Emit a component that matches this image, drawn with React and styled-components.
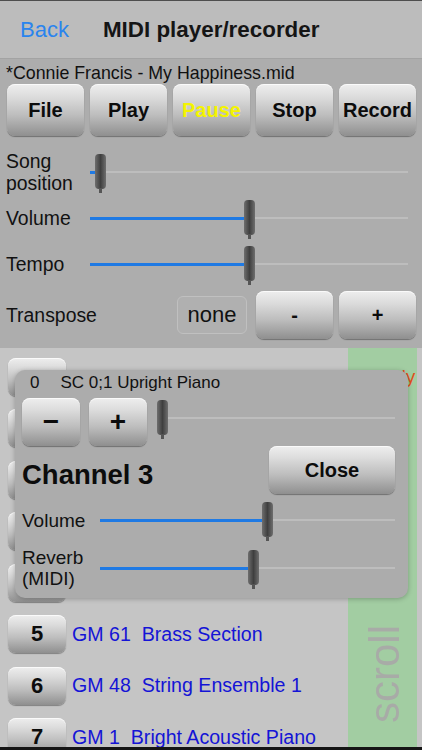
import React from "react";
import styled, { createGlobalStyle } from "styled-components";

const GlobalStyle = createGlobalStyle`
  html, body {
    margin: 0;
    padding: 0;
  }
  body {
    font-family: "Liberation Sans", Arial, sans-serif;
    background: #adadad;
  }
`;

// rows 0-4 sit under the channel popup, so their labels are not shown
const channels = [
  { n: "", name: "" },
  { n: "", name: "" },
  { n: "", name: "" },
  { n: "", name: "" },
  { n: "", name: "" },
  { n: "5", name: "GM 61  Brass Section" },
  { n: "6", name: "GM 48  String Ensemble 1" },
  { n: "7", name: "GM 1  Bright Acoustic Piano" },
];

const Slider = ({ value }) => (
  <Track>
    <Rail />
    <Fill $value={value} />
    <Thumb $value={value} />
  </Track>
);

const App = () => {
  return (
    <Screen>
      <GlobalStyle />
      <NavBar>
        <BackLink>Back</BackLink>
        <NavTitle>MIDI player/recorder</NavTitle>
      </NavBar>

      <Controls>
        <FileName>*Connie Francis - My Happiness.mid</FileName>
        <ButtonRow>
          <GlossButton>File</GlossButton>
          <GlossButton>Play</GlossButton>
          <GlossButton $color="#f4f400">Pause</GlossButton>
          <GlossButton>Stop</GlossButton>
          <GlossButton>Record</GlossButton>
        </ButtonRow>

        <SliderRow>
          <Label>
            Song
            <br />
            position
          </Label>
          <Slider value={0.016} />
        </SliderRow>
        <SliderRow>
          <Label>Volume</Label>
          <Slider value={0.5} />
        </SliderRow>
        <SliderRow>
          <Label>Tempo</Label>
          <Slider value={0.5} />
        </SliderRow>

        <TransposeRow>
          <Label>Transpose</Label>
          <NoneBox>none</NoneBox>
          <GlossButton $w="77px" $h="48px">-</GlossButton>
          <GlossButton $w="77px" $h="48px">+</GlossButton>
        </TransposeRow>
      </Controls>

      <ListArea>
        <Rows>
          {channels.map((c, i) => (
            <ChannelRow key={i}>
              <GlossButton $w="58px" $h="38px" $size="22px">
                {c.n}
              </GlossButton>
              <ChannelName>{c.name}</ChannelName>
            </ChannelRow>
          ))}
        </Rows>
        <ScrollColumn>
          <Melody>Melody</Melody>
          <ScrollText>scroll</ScrollText>
        </ScrollColumn>

        <Popup>
          <PopHeader>
            <span>0</span>
            <span>SC 0;1 Upright Piano</span>
          </PopHeader>
          <StepRow>
            <GlossButton $w="58px" $h="48px" $size="28px">
              −
            </GlossButton>
            <GlossButton $w="58px" $h="48px" $size="28px">
              +
            </GlossButton>
            <StepSlider>
              <Slider value={0} />
            </StepSlider>
          </StepRow>
          <TitleRow>
            <ChannelTitle>Channel 3</ChannelTitle>
            <GlossButton $w="126px" $h="48px">
              Close
            </GlossButton>
          </TitleRow>
          <PopSliderRow $h="52px">
            <PopLabel>Volume</PopLabel>
            <Slider value={0.57} />
          </PopSliderRow>
          <PopSliderRow $h="44px">
            <PopLabel>
              Reverb
              <br />
              (MIDI)
            </PopLabel>
            <Slider value={0.52} />
          </PopSliderRow>
        </Popup>
      </ListArea>
      <BottomEdge />
    </Screen>
  );
};

const Screen = styled.div`
  width: 422px;
  height: 750px;
  display: flex;
  flex-direction: column;
  overflow: hidden;
  background: #adadad;
`;

const NavBar = styled.div`
  box-sizing: border-box;
  height: 59px;
  display: flex;
  align-items: center;
  padding-left: 20px;
  gap: 34px;
  background: #bcbcbc;
  border-top: 1px solid #4e4e4e;
  border-bottom: 1px solid #a3a3a3;
`;

const BackLink = styled.span`
  font-size: 22px;
  color: #2a84ee;
`;

const NavTitle = styled.span`
  font-size: 22.4px;
  font-weight: 700;
  color: #151515;
`;

const Controls = styled.div`
  padding: 3px 6px 5px 7px;
  background: #adadad;
`;

const FileName = styled.div`
  height: 22px;
  line-height: 22px;
  font-size: 17.8px;
  color: #111;
  margin-left: -1px;
`;

const ButtonRow = styled.div`
  display: flex;
  gap: 6px;
  margin-bottom: 13px;
`;

const GlossButton = styled.button`
  flex: ${(p) => (p.$w ? "none" : "1")};
  width: ${(p) => p.$w || "auto"};
  height: ${(p) => p.$h || "52px"};
  padding: 0;
  border: none;
  border-radius: 8px;
  background: linear-gradient(
    to bottom,
    #eeeeee 0%,
    #dcdcdc 25%,
    #bdbdbd 60%,
    #8f8f8f 100%
  );
  box-shadow: 0 1px 1px rgba(0, 0, 0, 0.35),
    inset 0 1px 0 rgba(255, 255, 255, 0.7);
  font-family: "Liberation Sans", Arial, sans-serif;
  font-weight: 700;
  font-size: ${(p) => p.$size || "20px"};
  color: ${(p) => p.$color || "#0c0c0c"};
  line-height: 1;
`;

const SliderRow = styled.div`
  height: 46px;
  display: flex;
  align-items: center;
  padding-right: 8px;
`;

const Label = styled.div`
  width: 84px;
  flex: none;
  font-size: 19.4px;
  line-height: 22px;
  color: #111;
  margin-left: -1px;
`;

const Track = styled.div`
  position: relative;
  flex: 1;
  height: 36px;
`;

const Rail = styled.div`
  position: absolute;
  left: 0;
  right: 0;
  top: 17px;
  height: 2px;
  background: #bdbdbd;
`;

const Fill = styled.div`
  position: absolute;
  left: 0;
  top: 17px;
  height: 3px;
  width: calc(${(p) => p.$value} * (100% - 11px) + 4px);
  background: #1f7ae4;
`;

const Thumb = styled.div`
  position: absolute;
  top: 0;
  left: calc(${(p) => p.$value} * (100% - 11px));
  width: 11px;
  height: 35px;
  border-radius: 4px;
  background: linear-gradient(to right, #6e6e6e, #3f3f3f 50%, #6e6e6e);
  filter: blur(0.7px);

  &::after {
    content: "";
    position: absolute;
    left: 4px;
    bottom: -4px;
    width: 3px;
    height: 5px;
    background: #555;
  }
`;

const TransposeRow = styled.div`
  height: 56px;
  display: flex;
  align-items: center;
  gap: 6px;

  ${Label} {
    flex: 1;
  }
`;

const NoneBox = styled.div`
  box-sizing: border-box;
  width: 70px;
  height: 38px;
  margin-right: 3px;
  display: flex;
  align-items: center;
  justify-content: center;
  border: 1px solid #c0c0c0;
  border-radius: 6px;
  background: #b0b0b0;
  font-size: 22px;
  color: #111;
`;

const ListArea = styled.div`
  position: relative;
  flex: 1;
  display: flex;
  background: #c5c5c5;
  overflow: hidden;
`;

const Rows = styled.div`
  flex: 1;
  padding: 3px 0 0 8px;
`;

const ChannelRow = styled.div`
  height: 51.5px;
  display: flex;
  align-items: center;
  gap: 6px;
`;

const ChannelName = styled.span`
  font-size: 19.6px;
  color: #1414d6;
  white-space: pre;
`;

const ScrollColumn = styled.div`
  width: 69px;
  margin-right: 5px;
  display: flex;
  flex-direction: column;
  justify-content: space-between;
  background: #a2cda2;
`;

const Melody = styled.div`
  margin: 18px 0 0 6px;
  font-size: 19px;
  line-height: 22px;
  color: #e0501c;
  white-space: nowrap;
`;

const ScrollText = styled.div`
  writing-mode: vertical-rl;
  transform: rotate(180deg);
  align-self: flex-start;
  margin: 0 0 24px 16px;
  font-size: 42px;
  line-height: 42px;
  color: #a8aba7;
`;

const Popup = styled.div`
  position: absolute;
  top: 22px;
  left: 15px;
  box-sizing: border-box;
  width: 393px;
  height: 228px;
  padding: 0 13px 0 7px;
  border-radius: 10px;
  background: #acacac;
  box-shadow: 0 1px 5px rgba(0, 0, 0, 0.25);
`;

const PopHeader = styled.div`
  height: 26px;
  display: flex;
  align-items: center;
  gap: 21px;
  padding-left: 8px;
  font-size: 17px;
  color: #111;
`;

const StepRow = styled.div`
  margin-top: 2px;
  height: 48px;
  display: flex;
  align-items: center;
  gap: 9px;
`;

const StepSlider = styled.div`
  flex: 1;
  display: flex;
  margin-left: 1px;
  margin-top: -8px;
`;

const TitleRow = styled.div`
  height: 48px;
  display: flex;
  align-items: center;
  justify-content: space-between;
`;

const ChannelTitle = styled.div`
  font-size: 27.5px;
  font-weight: 700;
  color: #0c0c0c;
  margin-top: 10px;
`;

const PopSliderRow = styled.div`
  height: ${(p) => p.$h};
  display: flex;
  align-items: center;
`;

const PopLabel = styled.div`
  width: 78px;
  flex: none;
  font-size: 19px;
  line-height: 21px;
  color: #111;
`;

const BottomEdge = styled.div`
  height: 3px;
  background: #151515;
`;

export default App;
